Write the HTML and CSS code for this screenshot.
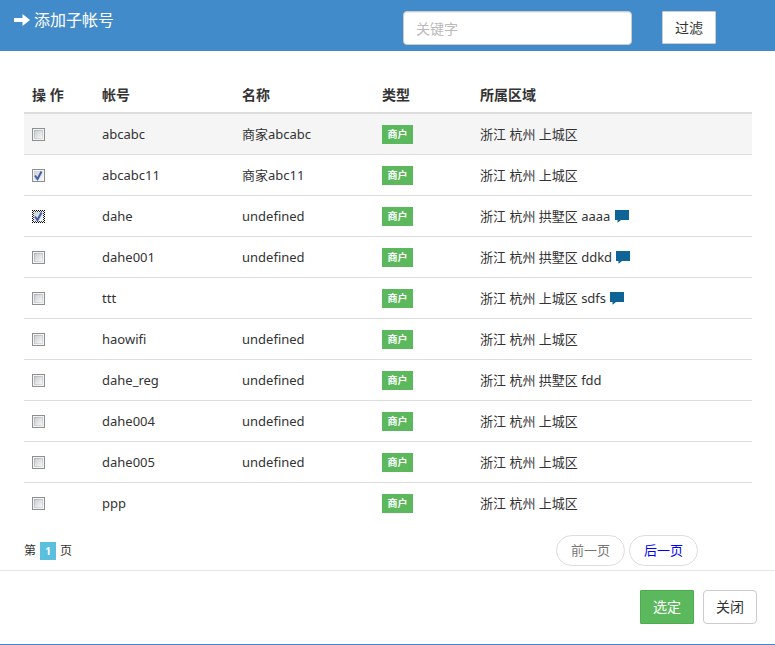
FILE: index.html
```html
<!DOCTYPE html>
<html lang="zh-CN">
<head>
<meta charset="utf-8">
<meta name="viewport" content="width=device-width, initial-scale=1">
<title>添加子帐号</title>
<link rel="stylesheet" href="styles.css">
</head>
<body>
<svg class="symbols" aria-hidden="true">
  <symbol id="comment" viewBox="0 0 14 13"><path d="M0 0h14v10H6l-3 2.500H2.500V10H0z"/></symbol>
</svg>
<div class="dialog">
  <header class="head">
    <h1 class="title">
      <svg class="arrow" viewBox="0 0 16 12" aria-hidden="true"><path d="M0 4h8.500V0L16 6l-7.500 6V8H0z"/></svg>
      添加子帐号
    </h1>
    <form class="search">
      <input class="keyword" type="text" placeholder="关键字" aria-label="关键字">
      <button class="btn filter" type="button">过滤</button>
    </form>
  </header>
  <main class="content">
    <table class="accounts">
      <thead>
        <tr><th class="c-op">操 作</th><th class="c-account">帐号</th><th class="c-name">名称</th><th class="c-type">类型</th><th>所属区域</th></tr>
      </thead>
      <tbody>
        <tr class="active"><td><input class="tick" type="checkbox" aria-label="abcabc"></td><td>abcabc</td><td>商家abcabc</td><td><span class="label">商户</span></td><td>浙江 杭州 上城区</td></tr>
        <tr><td><input class="tick" type="checkbox" aria-label="abcabc11" checked></td><td>abcabc11</td><td>商家abc11</td><td><span class="label">商户</span></td><td>浙江 杭州 上城区</td></tr>
        <tr><td><input class="tick focused" type="checkbox" aria-label="dahe" checked></td><td>dahe</td><td>undefined</td><td><span class="label">商户</span></td><td>浙江 杭州 拱墅区 aaaa <svg class="note" aria-hidden="true"><use href="#comment"/></svg></td></tr>
        <tr><td><input class="tick" type="checkbox" aria-label="dahe001"></td><td>dahe001</td><td>undefined</td><td><span class="label">商户</span></td><td>浙江 杭州 拱墅区 ddkd <svg class="note" aria-hidden="true"><use href="#comment"/></svg></td></tr>
        <tr><td><input class="tick" type="checkbox" aria-label="ttt"></td><td>ttt</td><td></td><td><span class="label">商户</span></td><td>浙江 杭州 上城区 sdfs <svg class="note" aria-hidden="true"><use href="#comment"/></svg></td></tr>
        <tr><td><input class="tick" type="checkbox" aria-label="haowifi"></td><td>haowifi</td><td>undefined</td><td><span class="label">商户</span></td><td>浙江 杭州 上城区</td></tr>
        <tr><td><input class="tick" type="checkbox" aria-label="dahe_reg"></td><td>dahe_reg</td><td>undefined</td><td><span class="label">商户</span></td><td>浙江 杭州 拱墅区 fdd</td></tr>
        <tr><td><input class="tick" type="checkbox" aria-label="dahe004"></td><td>dahe004</td><td>undefined</td><td><span class="label">商户</span></td><td>浙江 杭州 上城区</td></tr>
        <tr><td><input class="tick" type="checkbox" aria-label="dahe005"></td><td>dahe005</td><td>undefined</td><td><span class="label">商户</span></td><td>浙江 杭州 上城区</td></tr>
        <tr><td><input class="tick" type="checkbox" aria-label="ppp"></td><td>ppp</td><td></td><td><span class="label">商户</span></td><td>浙江 杭州 上城区</td></tr>
      </tbody>
    </table>
    <div class="paging">
      <p class="page">第 <span class="label current">1</span> 页</p>
      <nav class="pager" aria-label="分页">
        <a class="step disabled" aria-disabled="true" href="#">前一页</a>
        <a class="step" href="#">后一页</a>
      </nav>
    </div>
  </main>
  <footer class="foot">
    <button class="btn primary" type="button">选定</button>
    <button class="btn" type="button">关闭</button>
  </footer>
</div>
</body>
</html>
```
FILE: styles.css
```css
* { box-sizing: border-box; }

body {
  margin: 0;
  background: #428bca;
  color: #333;
  font: 13px/20px "Noto Sans", "Noto Sans CJK SC", sans-serif;
}

.symbols { position: absolute; width: 0; height: 0; }

.dialog {
  background: #fff;
  border-bottom: 1px solid #428bca;
}

.head {
  display: flex;
  justify-content: space-between;
  align-items: flex-start;
  padding: 11px 59px 6px 14px;
  background: #428bca;
}

.title {
  display: flex;
  align-items: center;
  gap: 4px;
  margin: 0;
  color: #fff;
  font-size: 16px;
  font-weight: 400;
  line-height: 18px;
}

.arrow { width: 16px; height: 12px; fill: #fff; }

.search { display: flex; gap: 30px; }

.keyword {
  width: 229px;
  height: 34px;
  padding: 6px 12px;
  border: 1px solid #ccc;
  border-radius: 4px;
  background: #fff;
  box-shadow: inset 0 1px 1px rgba(0, 0, 0, .08);
  color: #555;
  font: inherit;
  font-size: 14px;
}

.keyword::placeholder { color: #bbb; }

.btn {
  height: 34px;
  padding: 0 12px;
  border: 1px solid #ccc;
  border-radius: 4px;
  background: #fff;
  color: #333;
  font: inherit;
  font-size: 14px;
}

.btn.filter { height: 33px; border-radius: 1px; }

.btn.primary {
  border-color: #4cae4c;
  border-radius: 1px;
  background: #5cb85c;
  color: #fff;
}

.content { padding: 27px 23px 4px 24px; }

.accounts {
  width: 100%;
  border-collapse: separate;
  border-spacing: 0;
  table-layout: fixed;
}

.accounts th {
  height: 36px;
  padding: 0 8px;
  border-bottom: 2px solid #ddd;
  font-size: 14px;
  font-weight: 700;
  text-align: left;
}

.c-op { width: 70px; }
.c-account, .c-name { width: 140px; }
.c-type { width: 98px; }

.accounts td {
  height: 41px;
  padding: 0 8px;
  border-bottom: 1px solid #ddd;
  vertical-align: middle;
}

.accounts tr:last-child td { border-bottom-color: transparent; }
.accounts .active td { background: #f5f5f5; }

.tick {
  display: block;
  width: 13px;
  height: 13px;
  margin: 0;
  appearance: none;
  border: 1px solid #8e8f8f;
  background:
    linear-gradient(135deg, #cbcfd5, #f6f6f6) center / 7px 7px no-repeat,
    linear-gradient(135deg, #aeb3b9, #e2e4e6) center / 9px 9px no-repeat
    #f4f4f4;
}

.tick:checked {
  background:
    url("data:image/svg+xml,%3Csvg xmlns='http://www.w3.org/2000/svg' viewBox='0 0 11 11'%3E%3Cpath d='M2 5.5L4.5 9 8.5 1.500' fill='none' stroke='%23405fa5' stroke-width='2'/%3E%3C/svg%3E") center / 11px 11px no-repeat,
    linear-gradient(135deg, #cbcfd5, #f6f6f6) center / 9px 9px no-repeat
    #f4f4f4;
}

.tick.focused { border: 1px dotted #000; outline: 1px dotted #333; outline-offset: -2px; }

.label {
  display: inline-block;
  padding: 0 5px;
  background: #5cb85c;
  color: #fff;
  font-size: 10px;
  font-weight: 700;
  line-height: 19px;
  text-align: center;
}

.accounts .label { display: block; width: 31px; }

.label.current { min-width: 16px; background: #5bc0de; line-height: 18px; }

.note { width: 14px; height: 13px; margin-left: 1px; fill: #0e6496; vertical-align: -2px; }

.paging {
  display: flex;
  justify-content: space-between;
  align-items: center;
  padding: 11px 54px 0 0;
}

.page { display: flex; align-items: center; gap: 4px; margin: 0; font-size: 12px; }

.pager { display: flex; gap: 4px; }

.step {
  padding: 4px 14px 5px;
  border: 1px solid #ddd;
  border-radius: 16px;
  color: #00f;
  text-decoration: none;
}

.step.disabled { color: #777; }

.foot {
  display: flex;
  justify-content: flex-end;
  gap: 9px;
  padding: 19px 18px 20px;
  border-top: 1px solid #e5e5e5;
}
```
